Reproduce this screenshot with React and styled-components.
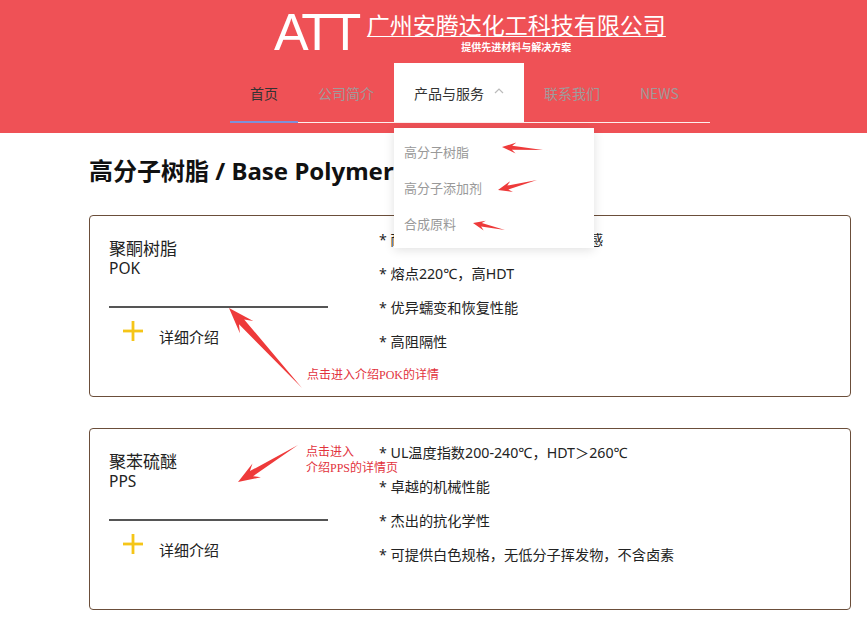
import React from "react";
import styled, { createGlobalStyle } from "styled-components";

const Global = createGlobalStyle`
  html, body { margin: 0; padding: 0; background: #fff; }
  body { font-family: "Noto Sans", "Noto Sans CJK SC", sans-serif; color: #333; }
  * { box-sizing: border-box; }
`;

const Page = styled.div`
  position: relative;
  width: 867px;
  min-height: 636px;
  overflow: hidden;
`;

const Header = styled.header`
  background: #ef5156;
  height: 133px;
  position: relative;
  z-index: 5;
`;

const HeaderInner = styled.div`
  margin-left: 230px;
  width: 480px;
`;

const Brand = styled.div`
  display: flex;
  align-items: flex-start;
  padding: 6px 0 0 44px;
`;

const Logo = styled.div`
  font-family: "Liberation Sans", Arial, sans-serif;
  font-size: 52px;
  line-height: 52px;
  letter-spacing: -3.5px;
  color: #fff;
  margin-right: 9px;
`;

const NameBlock = styled.div`
  margin-top: 5px;
  display: flex;
  flex-direction: column;
  align-items: center;
`;

const CompanyName = styled.a`
  font-family: "Noto Sans CJK SC", sans-serif;
  font-size: 23px;
  line-height: 27px;
  color: #fff;
  text-decoration: underline;
  text-decoration-thickness: 1px;
  text-underline-offset: 2px;
`;

const Slogan = styled.div`
  font-family: "Noto Sans CJK SC", sans-serif;
  font-size: 10px;
  line-height: 12px;
  font-weight: 700;
  color: #fff;
  margin-top: 3px;
`;

const Nav = styled.nav`
  margin-top: 5px;
  display: flex;
  border-bottom: 1px solid rgba(255, 255, 255, 0.9);
`;

const NavItem = styled.div`
  position: relative;
  height: 59px;
  padding: 0 20px;
  display: flex;
  align-items: center;
  font-family: "Noto Sans CJK SC", sans-serif;
  font-size: 14px;
  color: ${(p) => (p.$dim ? "#a09a9a" : "#333")};
  background: ${(p) => (p.$open ? "#fff" : "transparent")};
  &::after {
    content: "";
    display: ${(p) => (p.$active ? "block" : "none")};
    position: absolute;
    left: 0;
    right: 0;
    bottom: -1px;
    height: 2px;
    background: #7f90d8;
  }
`;

const Chevron = styled.svg`
  margin-left: 10px;
  width: 10px;
  height: 10px;
  margin-top: -4px;
`;

const Dropdown = styled.div`
  position: absolute;
  left: 0;
  top: 65px;
  width: 200px;
  height: 120px;
  background: #fff;
  box-shadow: 0 2px 10px rgba(0, 0, 0, 0.12);
  padding-top: 6px;
  z-index: 10;
`;

const DropItem = styled.div`
  height: 36px;
  line-height: 36px;
  padding-left: 10px;
  font-size: 13px;
  color: #999;
`;

const Main = styled.main`
  padding: 22px 16px 0 89px;
`;

const Title = styled.h2`
  margin: 0;
  font-family: "Noto Sans", "Noto Sans CJK SC", sans-serif;
  font-size: 24px;
  line-height: 32px;
  font-weight: 700;
  color: #111;
`;

const CardList = styled.div`
  margin-top: 28px;
  display: flex;
  flex-direction: column;
  gap: 31px;
`;

const Card = styled.section`
  height: 182px;
  border: 1px solid #6b4e3a;
  border-radius: 4px;
  display: flex;
`;

const Left = styled.div`
  width: 240px;
  padding: 21px 0 0 19px;
`;

const Name = styled.div`
  font-family: "Noto Sans CJK SC", sans-serif;
  font-size: 17px;
  line-height: 22px;
  color: #222;
`;

const Code = styled.div`
  font-size: 15.5px;
  line-height: 19px;
  color: #222;
`;

const Divider = styled.div`
  margin-top: 28px;
  width: 219px;
  height: 2px;
  background: #555;
`;

const More = styled.div`
  margin-top: 13px;
  display: flex;
  align-items: flex-start;
`;

const Plus = styled.svg`
  width: 20px;
  height: 20px;
  margin-left: 14px;
  margin-right: 16px;
`;

const MoreText = styled.span`
  margin-top: 5px;
  font-family: "Noto Sans CJK SC", sans-serif;
  font-size: 15px;
  line-height: 22px;
  color: #222;
`;

const Bullets = styled.ul`
  list-style: none;
  margin: 0;
  padding: 7px 0 0 49px;
`;

const Bullet = styled.li`
  height: 34px;
  line-height: 34px;
  font-family: "Noto Sans", "Noto Sans CJK SC", sans-serif;
  font-size: 14.2px;
  color: #222;
`;

const Overlay = styled.svg`
  position: absolute;
  left: 0;
  top: 0;
  width: 867px;
  height: 636px;
  pointer-events: none;
  z-index: 20;
`;

const Note = styled.div`
  position: absolute;
  left: ${(p) => p.$x}px;
  top: ${(p) => p.$y}px;
  font-family: "Liberation Serif", "Noto Sans CJK SC", serif;
  font-size: 12px;
  line-height: 16px;
  color: #e2333d;
  z-index: 20;
  white-space: nowrap;
`;

function arrow(tx, ty, hx, hy, head, wb, ws) {
  const dx = hx - tx;
  const dy = hy - ty;
  const L = Math.hypot(dx, dy);
  const ux = dx / L;
  const uy = dy / L;
  const nx = -uy;
  const ny = ux;
  const bx = hx - ux * head;
  const by = hy - uy * head;
  const sx = hx - ux * head * 0.72;
  const sy = hy - uy * head * 0.72;
  const pts = [
    [tx, ty],
    [sx + nx * ws, sy + ny * ws],
    [bx + nx * wb, by + ny * wb],
    [hx, hy],
    [bx - nx * wb, by - ny * wb],
    [sx - nx * ws, sy - ny * ws],
  ];
  return pts.map((p) => p[0].toFixed(1) + "," + p[1].toFixed(1)).join(" ");
}

const arrows = [
  [543, 150, 502, 147, 14, 5.5, 2],
  [537, 180, 498, 190, 14, 5.5, 2],
  [505, 230, 473, 223, 12, 5, 1.8],
  [302, 388, 229, 308, 26, 9, 3.5],
  [298, 445, 238, 482, 22, 8, 3],
];

const products = [
  {
    name: "聚酮树脂",
    code: "POK",
    bullets: [
      "* 耐化学，耐磨损，HDT高，低敏感",
      "* 熔点220℃，高HDT",
      "* 优异蠕变和恢复性能",
      "* 高阻隔性",
    ],
  },
  {
    name: "聚苯硫醚",
    code: "PPS",
    bullets: [
      "* UL温度指数200-240℃，HDT＞260℃",
      "* 卓越的机械性能",
      "* 杰出的抗化学性",
      "* 可提供白色规格，无低分子挥发物，不含卤素",
    ],
  },
];

export default function App() {
  return (
    <Page>
      <Global />
      <Header>
        <HeaderInner>
          <Brand>
            <Logo>ATT</Logo>
            <NameBlock>
              <CompanyName>广州安腾达化工科技有限公司</CompanyName>
              <Slogan>提供先进材料与解决方案</Slogan>
            </NameBlock>
          </Brand>
          <Nav>
            <NavItem $active>首页</NavItem>
            <NavItem $dim>公司简介</NavItem>
            <NavItem $open>
              产品与服务
              <Chevron viewBox="0 0 10 10">
                <polyline points="1,7 5,3 9,7" fill="none" stroke="#bbb" strokeWidth="1.2" />
              </Chevron>
              <Dropdown>
                <DropItem>高分子树脂</DropItem>
                <DropItem>高分子添加剂</DropItem>
                <DropItem>合成原料</DropItem>
              </Dropdown>
            </NavItem>
            <NavItem $dim>联系我们</NavItem>
            <NavItem $dim>NEWS</NavItem>
          </Nav>
        </HeaderInner>
      </Header>
      <Main>
        <Title>高分子树脂 / Base Polymers</Title>
        <CardList>
          {products.map((p) => (
            <Card key={p.code}>
              <Left>
                <Name>{p.name}</Name>
                <Code>{p.code}</Code>
                <Divider />
                <More>
                  <Plus viewBox="0 0 20 20">
                    <rect x="8.6" y="0" width="2.8" height="20" fill="#f5c518" />
                    <rect x="0" y="8.6" width="20" height="2.8" fill="#f5c518" />
                  </Plus>
                  <MoreText>详细介绍</MoreText>
                </More>
              </Left>
              <Bullets>
                {p.bullets.map((b) => (
                  <Bullet key={b}>{b}</Bullet>
                ))}
              </Bullets>
            </Card>
          ))}
        </CardList>
      </Main>
      <Overlay viewBox="0 0 867 636">
        {arrows.map((a, i) => (
          <polygon key={i} points={arrow(...a)} fill="#ee3a3a" />
        ))}
      </Overlay>
      <Note $x={307} $y={367}>点击进入介绍POK的详情</Note>
      <Note $x={306} $y={444}>
        点击进入
        <br />
        介绍PPS的详情页
      </Note>
    </Page>
  );
}
